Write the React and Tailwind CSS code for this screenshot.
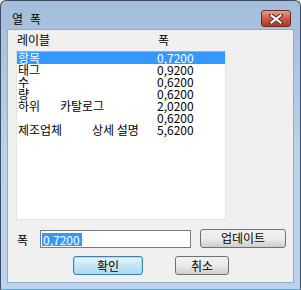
import React, { useState } from 'react';

const font = { fontFamily: '"Noto Sans CJK KR", "Liberation Sans", sans-serif' };

const rows = [
  { label: ['항목'], width: '0,7200' },
  { label: ['태그'], width: '0,9200' },
  { label: ['수'], width: '0,6200' },
  { label: ['량'], width: '0,6200' },
  { label: ['하위', '카탈로그'], width: '2,0200', tab: 'w-[42px]' },
  { label: [''], width: '0,6200' },
  { label: ['제조업체', '상세 설명'], width: '5,6200', tab: 'w-[74px]' },
];

const CloseIcon = () => (
  <svg width="14" height="10" viewBox="0 0 14 10">
    <path d="M2 1 L12 9 M12 1 L2 9" stroke="#5a2a20" strokeWidth="4" strokeLinecap="square" />
    <path d="M2.5 1.5 L11.5 8.5 M11.5 1.5 L2.5 8.5" stroke="#ffffff" strokeWidth="2.2" strokeLinecap="square" />
  </svg>
);

const ColumnWidthDialog = () => {
  const [selected, setSelected] = useState(0);

  return (
    <div className="w-[301px] h-[290px] bg-[#f0f0f0]" style={font}>
      <div className="w-full h-full flex flex-col rounded-t-[6px] border border-[#3e4e62] border-b-[#20c4d8] bg-gradient-to-b from-[#a3bedb] via-[#b9d1ea] to-[#bcd3eb]">
        {/* title bar */}
        <div className="h-[28px] flex items-center justify-between pl-[11px] pr-[9px] shrink-0">
          <span className="text-[12px] leading-[12px] text-black tracking-[2px] mt-[7px]">열 폭</span>
          <button className="w-[30px] h-[17px] mt-[7px] flex items-center justify-center rounded-[3px] border border-[#6e2a1f] bg-gradient-to-b from-[#e2a294] via-[#cb5a44] to-[#b23a22]">
            <CloseIcon />
          </button>
        </div>

        {/* client area */}
        <div className="mx-[6px] mb-[6px] flex-1 bg-[#f0f0f0] border border-[#94a9c3] flex flex-col text-[12px] leading-[12px] text-black">
          <div className="flex h-[20px] items-end pb-[4px] pl-[9px] shrink-0">
            <span className="w-[141px]">레이블</span>
            <span>폭</span>
          </div>

          <div className="ml-[8px] mt-[1px] w-[210px] h-[169px] bg-white border border-[#e2e3ea] border-t-[#abadb3] border-b-[#e3e9ef] shrink-0">
            {rows.map((row, i) => (
              <div
                key={i}
                onClick={() => setSelected(i)}
                className={`flex h-[12px] leading-[12px] whitespace-nowrap ${selected === i ? 'bg-[#3399ff] text-white' : ''}`}
              >
                <span className="w-[140px] pl-[1px] flex">
                  {row.label[1] ? (
                    <>
                      <span className={row.tab}>{row.label[0]}</span>
                      <span>{row.label[1]}</span>
                    </>
                  ) : (
                    row.label[0]
                  )}
                </span>
                <span>{row.width}</span>
              </div>
            ))}
          </div>

          <div className="flex items-center mt-[8px] pl-[9px] shrink-0">
            <span className="w-[23px] mt-[3px]">폭</span>
            <div className="w-[151px] h-[18px] mt-[2px] bg-white border border-[#7a7a7a] flex items-center px-[1px]">
              <span className="bg-[#3399ff] text-white px-[1px] leading-[13px]">{rows[selected].width}</span>
              <span className="w-[1px] h-[13px] bg-[#d46a00]" />
            </div>
            <button className="ml-[9px] w-[86px] h-[19px] rounded-[3px] border border-[#707070] bg-gradient-to-b from-[#f2f2f2] via-[#ebebeb] to-[#cfcfcf] text-[12px] leading-[12px]">
              업데이트
            </button>
          </div>

          <div className="flex mt-[8px] shrink-0">
            <button className="ml-[65px] w-[70px] h-[19px] rounded-[3px] border border-[#3c7fb1] bg-gradient-to-b from-[#e8f5fc] via-[#c6e6f7] to-[#a9d9f2] text-[12px] leading-[12px] shadow-[inset_0_0_0_1px_#9ee0f8]">
              확인
            </button>
            <button className="ml-[32px] w-[54px] h-[19px] rounded-[3px] border border-[#707070] bg-gradient-to-b from-[#f2f2f2] via-[#ebebeb] to-[#cfcfcf] text-[12px] leading-[12px]">
              취소
            </button>
          </div>
        </div>
      </div>
    </div>
  );
};

export default ColumnWidthDialog;
